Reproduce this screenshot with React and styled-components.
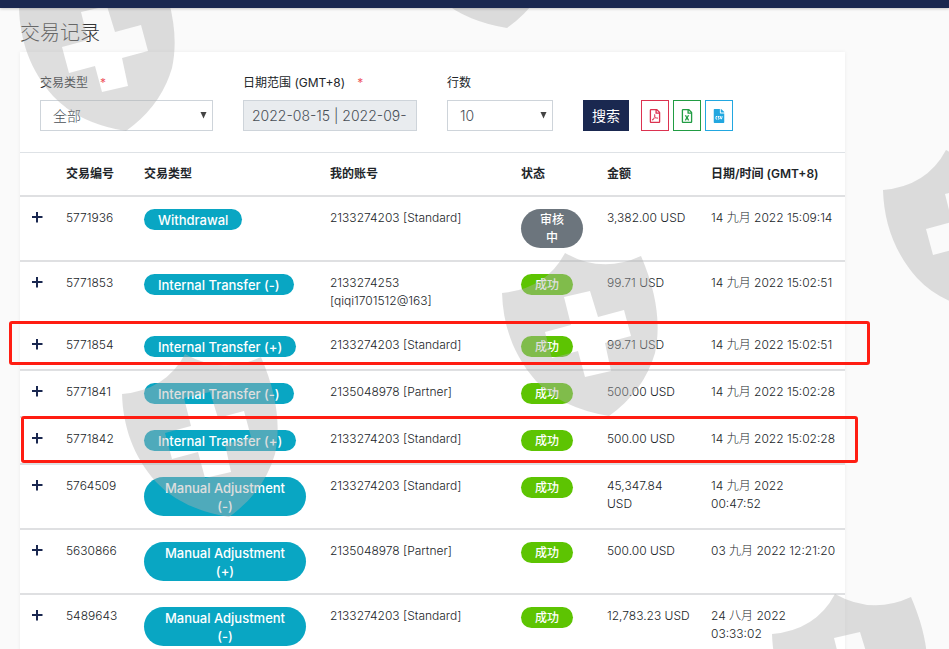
import React from 'react';
import styled, { createGlobalStyle } from 'styled-components';
import { FaRegFilePdf, FaRegFileExcel, FaFileCsv } from 'react-icons/fa';

const GlobalStyle = createGlobalStyle`
	* {
		box-sizing: border-box;
	}
	body {
		margin: 0;
		background: #fafafa;
		color: #212529;
		font-family: Inter, "Noto Sans CJK SC", sans-serif;
		font-size: 12px;
		font-weight: 300;
		line-height: 18px;
	}
	button, input, select {
		font: inherit;
	}
`;

const Page = styled.div`
	position: relative;
	overflow: hidden;
	min-height: 100vh;
`;

const TopBar = styled.header`
	position: relative;
	z-index: 3;
	height: 8px;
	background: #1a2850;
	box-shadow: 0 1px 3px rgba(0, 0, 0, 0.2);
`;

const Main = styled.main`
	padding: 10px 104px 0 20px;
`;

const Title = styled.h1`
	margin: 0;
	padding-bottom: 4px;
	font-size: 20px;
	font-weight: 300;
	line-height: 30px;
	color: #333;
`;

const Card = styled.section`
	background: #fff;
	box-shadow: 0 0 4px rgba(0, 0, 0, 0.06);
`;

const Filters = styled.form`
	display: flex;
	align-items: flex-end;
	gap: 30px;
	padding: 22px 20px 21px;
`;

const Field = styled.div`
	flex: 0 1 ${({ $width }) => $width}px;
	min-width: 0;
`;

const Label = styled.label`
	display: block;
	margin-bottom: 8px;
	font-weight: 400;
`;

const Required = styled.span`
	margin-left: 12px;
	color: #ee5560;
`;

const SelectWrap = styled.div`
	position: relative;
	svg {
		position: absolute;
		top: 12px;
		right: 6px;
		pointer-events: none;
	}
`;

const Select = styled.select`
	display: block;
	appearance: none;
	width: 100%;
	height: 31px;
	padding: 0 12px;
	border: 1px solid #ced4da;
	border-radius: 0;
	background: #fff;
	color: #495057;
	font-size: 14px;
`;

const DateInput = styled.input`
	display: block;
	width: 100%;
	height: 31px;
	padding: 0 8px;
	border: 1px solid #ced4da;
	background: #e9ecef;
	color: #495057;
	font-size: 14px;
`;

const Actions = styled.div`
	display: flex;
	gap: 12px;
`;

const Exports = styled.div`
	display: flex;
	gap: 4px;
`;

const SearchButton = styled.button`
	width: 46px;
	height: 31px;
	padding: 0;
	border: 0;
	background: #1a2850;
	color: #fff;
	font-size: 14px;
	font-weight: 400;
`;

const ExportButton = styled.button`
	display: flex;
	align-items: center;
	justify-content: center;
	width: 28px;
	height: 31px;
	padding: 0;
	border: 1px solid ${({ $color }) => $color};
	background: #fff;
	color: ${({ $color }) => $color};
	font-size: 14px;
`;

const Table = styled.table`
	width: 100%;
	table-layout: fixed;
	border-collapse: separate;
	border-spacing: 0;
`;

const Th = styled.th`
	width: ${({ $width }) => ($width ? `${$width}px` : 'auto')};
	padding: 12px 0 12px 12px;
	border-top: 1px solid #dee2e6;
	text-align: left;
	font-weight: 600;
	white-space: nowrap;
`;

const Row = styled.tr`
	position: relative;
`;

const Td = styled.td`
	padding: 12px;
	border-top: 2px solid #dfe0e2;
	vertical-align: top;
	white-space: nowrap;
`;

const Line = styled.div`
	height: 18px;
`;

const ExpandButton = styled.button`
	display: block;
	padding: 3px 0 4px;
	border: 0;
	background: none;
	svg {
		display: block;
	}
`;

const badgeColors = {
	type: '#09a6c3',
	success: '#5dc402',
	pending: '#6c757d',
};

const Badge = styled.span`
	display: inline-block;
	vertical-align: top;
	padding: 2px 14px 1px;
	border-radius: 20px;
	background: ${({ $kind }) => badgeColors[$kind]};
	color: #fff;
	font-size: ${({ $kind }) => ($kind === 'type' ? 13 : 12)}px;
	font-weight: 500;
	text-align: center;
	white-space: normal;
`;

const Highlight = styled.span`
	position: absolute;
	z-index: 2;
	top: ${({ $top }) => $top}px;
	bottom: ${({ $bottom }) => $bottom}px;
	left: ${({ $left }) => $left}px;
	right: ${({ $right }) => $right}px;
	border: 3px solid #ff1d12;
	border-radius: 3px;
	pointer-events: none;
`;

const Watermark = styled.div`
	position: absolute;
	z-index: 1;
	inset: 0;
	overflow: hidden;
	pointer-events: none;
`;

const Shield = styled.svg`
	position: absolute;
	left: ${({ $x }) => $x}px;
	top: ${({ $y }) => $y}px;
	fill: rgba(176, 176, 176, 0.42);
`;

const shields = [
	[12, -40],
	[393, -143],
	[876, 142],
	[495, 245],
	[115, 346],
	[765, 586],
];

const columns = [
	['', 34],
	['交易编号', 78],
	['交易类型', 186],
	['我的账号', 191],
	['状态', 86],
	['金额', 104],
	['日期/时间 (GMT+8)', 0],
];

const rows = [
	{
		id: '5771936',
		type: 'Withdrawal',
		account: ['2133274203 [Standard]'],
		pending: true,
		amount: ['3,382.00 USD'],
		date: ['14 九月 2022 15:09:14'],
	},
	{
		id: '5771853',
		type: 'Internal Transfer (-)',
		account: ['2133274253', '[qiqi1701512@163]'],
		amount: ['99.71 USD'],
		date: ['14 九月 2022 15:02:51'],
	},
	{
		id: '5771854',
		type: 'Internal Transfer (+)',
		account: ['2133274203 [Standard]'],
		amount: ['99.71 USD'],
		date: ['14 九月 2022 15:02:51'],
		mark: { $top: -1, $bottom: 4, $left: -11, $right: -25 },
	},
	{
		id: '5771841',
		type: 'Internal Transfer (-)',
		account: ['2135048978 [Partner]'],
		amount: ['500.00 USD'],
		date: ['14 九月 2022 15:02:28'],
	},
	{
		id: '5771842',
		type: 'Internal Transfer (+)',
		account: ['2133274203 [Standard]'],
		amount: ['500.00 USD'],
		date: ['14 九月 2022 15:02:28'],
		mark: { $top: 0, $bottom: 0, $left: 1, $right: -13 },
	},
	{
		id: '5764509',
		type: 'Manual Adjustment (-)',
		account: ['2133274203 [Standard]'],
		amount: ['45,347.84', 'USD'],
		date: ['14 九月 2022', '00:47:52'],
	},
	{
		id: '5630866',
		type: 'Manual Adjustment (+)',
		account: ['2135048978 [Partner]'],
		amount: ['500.00 USD'],
		date: ['03 九月 2022 12:21:20'],
	},
	{
		id: '5489643',
		type: 'Manual Adjustment (-)',
		account: ['2133274203 [Standard]'],
		amount: ['12,783.23 USD'],
		date: ['24 八月 2022', '03:33:02'],
	},
];

const Caret = () => (
	<svg width="7" height="7" viewBox="0 0 7 7" aria-hidden="true">
		<path d="M0.5,0 H6.5 L3.5,6.5 Z" fill="#444" />
	</svg>
);

const Lines = ({ items }) => items.map((item) => <Line key={item}>{item}</Line>);

const TransactionRow = ({ row }) => (
	<Row>
		<Td>
			<ExpandButton type="button" aria-label={`展开 ${row.id}`}>
				<svg width="11" height="11" viewBox="0 0 11 11">
					<path d="M5,0 V10.5 M0,5 H10.5" stroke="#1a2850" strokeWidth="2" />
				</svg>
			</ExpandButton>
			{row.mark && <Highlight {...row.mark} />}
		</Td>
		<Td>{row.id}</Td>
		<Td>
			<Badge $kind="type">{row.type}</Badge>
		</Td>
		<Td>
			<Lines items={row.account} />
		</Td>
		<Td>
			<Badge $kind={row.pending ? 'pending' : 'success'}>
				{row.pending ? '审核中' : '成功'}
			</Badge>
		</Td>
		<Td>
			<Lines items={row.amount} />
		</Td>
		<Td>
			<Lines items={row.date} />
		</Td>
	</Row>
);

const App = () => (
	<Page>
		<GlobalStyle />
		<TopBar />
		<Main>
			<Title>交易记录</Title>
			<Card>
				<Filters onSubmit={(e) => e.preventDefault()}>
					<Field $width={173}>
						<Label htmlFor="type">
							交易类型<Required>*</Required>
						</Label>
						<SelectWrap>
							<Select id="type">
								<option>全部</option>
							</Select>
							<Caret />
						</SelectWrap>
					</Field>
					<Field $width={174}>
						<Label htmlFor="range">
							日期范围 (GMT+8)<Required>*</Required>
						</Label>
						<DateInput id="range" readOnly value="2022-08-15 | 2022-09-" />
					</Field>
					<Field $width={106}>
						<Label htmlFor="count">行数</Label>
						<SelectWrap>
							<Select id="count">
								<option>10</option>
							</Select>
							<Caret />
						</SelectWrap>
					</Field>
					<Actions>
						<SearchButton type="submit">搜索</SearchButton>
						<Exports>
							<ExportButton type="button" $color="#dc3250" aria-label="PDF">
								<FaRegFilePdf />
							</ExportButton>
							<ExportButton type="button" $color="#219c43" aria-label="Excel">
								<FaRegFileExcel />
							</ExportButton>
							<ExportButton type="button" $color="#22a7e0" aria-label="CSV">
								<FaFileCsv />
							</ExportButton>
						</Exports>
					</Actions>
				</Filters>
				<Table>
					<thead>
						<tr>
							{columns.map(([name, width]) => (
								<Th key={name} $width={width}>{name}</Th>
							))}
						</tr>
					</thead>
					<tbody>
						{rows.map((row) => (
							<TransactionRow key={row.id} row={row} />
						))}
					</tbody>
				</Table>
			</Card>
		</Main>
		<Watermark aria-hidden="true">
			{shields.map(([x, y]) => (
				<Shield key={`${x},${y}`} $x={x} $y={y} width="170" height="180" viewBox="0 0 170 180">
					<path
						fillRule="evenodd"
						d="M70,8 Q107,29 146,11 C162,48 166,80 160,108 Q149,146 114,171 Q66,163 41,136 C18,110 8,80 7,48 Q51,44 70,8 Z M69,52 L95,46 L103,72 L129,65 L136,91 L110,98 L116,126 L90,132 L83,106 L57,113 L50,87 L76,80 Z"
					/>
				</Shield>
			))}
		</Watermark>
	</Page>
);

export default App;
